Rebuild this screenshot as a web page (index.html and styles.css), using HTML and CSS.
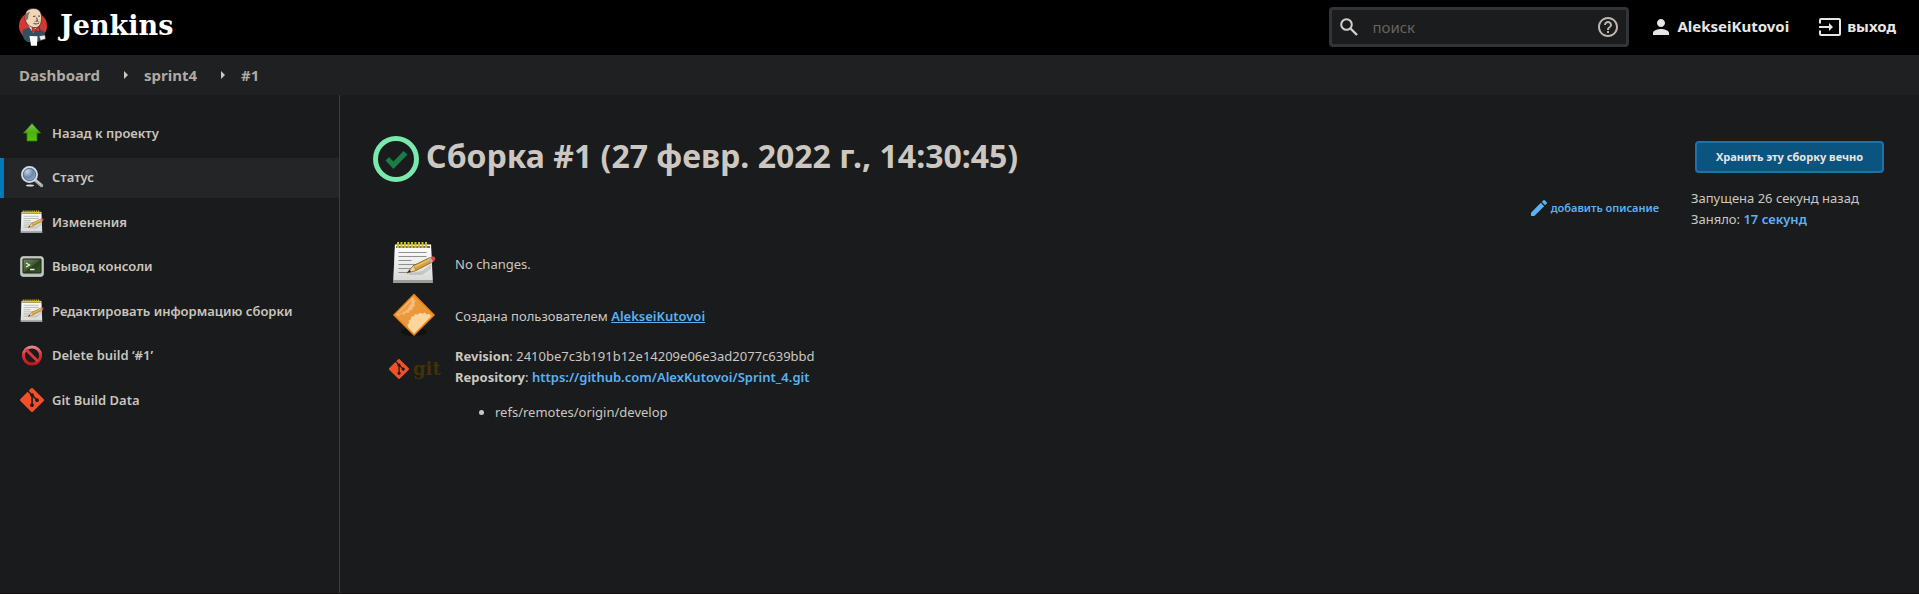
FILE: index.html
```html
<!DOCTYPE html>
<html lang="ru">
<head>
<meta charset="utf-8">
<meta name="viewport" content="width=device-width, initial-scale=1">
<title>sprint4 #1 [Jenkins]</title>
<link rel="stylesheet" href="styles.css">
</head>
<body>
<svg class="defs" width="0" height="0" aria-hidden="true">
  <defs>
    <linearGradient id="g-green" x1="0" y1="0" x2="0" y2="1"><stop offset="0" stop-color="#86c552"/><stop offset=".5" stop-color="#4fae14"/><stop offset="1" stop-color="#52c80c"/></linearGradient>
    <linearGradient id="g-paper" x1="0" y1="0" x2="0" y2="1"><stop offset="0" stop-color="#ffffff"/><stop offset="1" stop-color="#d8dad8"/></linearGradient>
    <linearGradient id="g-red" x1="0" y1="0" x2="0" y2="1"><stop offset="0" stop-color="#e8868a"/><stop offset=".45" stop-color="#dd3338"/><stop offset="1" stop-color="#c4161c"/></linearGradient>
    <linearGradient id="g-screen" x1="0" y1="0" x2="1" y2="1"><stop offset="0" stop-color="#6d8a5c"/><stop offset=".5" stop-color="#3f5a31"/><stop offset=".52" stop-color="#263f1b"/><stop offset="1" stop-color="#3b5a29"/></linearGradient>
    <radialGradient id="g-lens" cx=".35" cy=".3" r=".8"><stop offset="0" stop-color="#c2d3e8"/><stop offset=".5" stop-color="#6c87ab"/><stop offset="1" stop-color="#aec3dd"/></radialGradient>
    <linearGradient id="g-orange" x1="0" y1="0" x2="1" y2="1"><stop offset="0" stop-color="#f0a04a"/><stop offset="1" stop-color="#e58f2c"/></linearGradient>
    <symbol id="notepad" viewBox="0 0 44 42">
      <path d="M3 2h36l2 39H1z" fill="#9a9c9a"/>
      <path d="M3 3h36l1.500 35H1.500z" fill="url(#g-paper)"/>
      <path d="M4 4h34v2H4z" fill="#77705a"/>
      <path d="M6 0v6M9.500 0v6M13 0v6M16.500 0v6M20 0v6M23.500 0v6M27 0v6M30.500 0v6M34 0v6" stroke="#d3bd24" stroke-width="2"/>
      <path d="M6.500 10.500h28M6.500 14.500h28M6.500 18.500h13M6.500 22.500h25M6.500 26.500h13M6.500 30.500h10" stroke="#8d908d" stroke-width="1"/>
      <path d="M17 31l13-2 9-7v5l-9 6-13 0z" fill="#000" opacity=".12"/>
      <path d="M15 31l6.500-7.500L38 15.500l2.500 4.500-16.500 8.500z" fill="#d3a03c" stroke="#8a5e1a" stroke-width=".8"/>
      <path d="M15 31l6.500-7.500 2.500 5z" fill="#ecd3a4" stroke="#8a5e1a" stroke-width=".5"/>
      <path d="M15 31l2.800-3.200 1 2z" fill="#222"/>
      <path d="M22.500 25l16-8" stroke="#f2cf7a" stroke-width="1.200"/>
      <path d="M36.500 16.200l2.500-1.200 2.500 4.500-2.500 1.300z" fill="#b4b6b4"/>
      <path d="M38.500 15.200l2-.8c2-.6 3.700 2.700 2.200 4l-1.800 1.200z" fill="#e04446"/>
    </symbol>
    <symbol id="git-mark" viewBox="0 0 92 92">
      <path fill="#f34f29" d="M90.156 41.965 50.036 1.848a5.918 5.918 0 0 0-8.372 0l-8.328 8.332 10.566 10.566a7.030 7.030 0 0 1 7.230 1.684 7.034 7.034 0 0 1 1.669 7.277l10.187 10.184a7.028 7.028 0 0 1 7.278 1.672 7.040 7.040 0 0 1 0 9.957 7.050 7.050 0 0 1-9.965 0 7.044 7.044 0 0 1-1.528-7.660l-9.500-9.497V59.360a7.040 7.040 0 0 1 1.860 11.290 7.040 7.040 0 0 1-9.957 0 7.040 7.040 0 0 1 0-9.958 7.060 7.060 0 0 1 2.304-1.539V33.926a7.049 7.049 0 0 1-3.820-9.234L29.242 14.272 1.730 41.777a5.918 5.918 0 0 0 0 8.371L41.852 90.270a5.925 5.925 0 0 0 8.370 0l39.934-39.934a5.925 5.925 0 0 0 0-8.371"/>
    </symbol>
  </defs>
</svg>

<header class="header">
  <a class="brand" href="#">
    <svg class="brand-mark" viewBox="0 0 28 38" aria-hidden="true">
      <circle cx="14" cy="18" r="14" fill="#d33833"/>
      <path d="M4 22c2-1.500 4-2 6-2.500l9 .5 7 4-1 6-6 4H8l-3-3c-1.500-3-2-6-1-9z" fill="#335061"/>
      <path d="M9 17l5 8 5-7z" fill="#f2efec"/>
      <path d="M6.500 8C6 3 10 .5 14.500.5c5 0 7.500 3 8 7.500.3 5-.5 10.500-5 11.500-4 .5-8-1-9.500-4C6.500 14 5.500 10.500 6.500 8z" fill="#f0d6b7" stroke="#3b2f2a" stroke-width=".8"/>
      <path d="M6.500 7C5.500 8.500 6 11 7 12.500l2-1.500.5-4L11 4c-2 .2-3.500 1.200-4.500 3z" fill="#7b7672"/>
      <path d="M14 8.500l2.500-.4M19 8l2 .2M17.500 9.500l1 3-1.500.5M14.500 15.500c2 .8 4 .5 5.500-.5" stroke="#3b2f2a" fill="none" stroke-width=".9"/>
      <path d="M15.500 13.800c1.800-.8 3.500-.6 5 .2" fill="none" stroke="#8a7a6c" stroke-width="1"/>
      <path d="M13 19.500l3.500 1.500 4-2v5l-4-1.500-3.500 2z" fill="#d33833" stroke="#7a1513" stroke-width=".5"/>
      <path d="M10.500 28l8 .3-.5 9.500h-6z" fill="#fff"/>
      <path d="M20 28l6-1 .5 4-5 1.500z" fill="#f2efec" stroke="#3b2f2a" stroke-width=".5"/>
    </svg>
    <span class="brand-name">Jenkins</span>
  </a>
  <form class="search" role="search">
    <svg class="search-icon" viewBox="0 0 18 18" aria-hidden="true"><circle cx="6.500" cy="6.500" r="5.300" fill="none" stroke="currentColor" stroke-width="2"/><path d="M10.500 10.500l6.500 6.500" stroke="currentColor" stroke-width="2.400"/></svg>
    <input class="search-input" type="text" placeholder="поиск" aria-label="поиск">
    <a class="search-help" href="#" aria-label="Справка">
      <svg viewBox="0 0 24 24" aria-hidden="true"><path fill="currentColor" d="M11 18h2v-2h-2v2zm1-16C6.480 2 2 6.480 2 12s4.480 10 10 10 10-4.480 10-10S17.520 2 12 2zm0 18c-4.410 0-8-3.590-8-8s3.590-8 8-8 8 3.590 8 8-3.590 8-8 8zm0-14c-2.210 0-4 1.790-4 4h2c0-1.100.9-2 2-2s2 .9 2 2c0 2-3 1.750-3 5h2c0-2.250 3-2.500 3-5 0-2.210-1.790-4-4-4z"/></svg>
    </a>
  </form>
  <a class="header-link" href="#">
    <svg class="person" viewBox="4 4 16 16" aria-hidden="true"><path fill="currentColor" d="M12 12c2.210 0 4-1.790 4-4s-1.790-4-4-4-4 1.790-4 4 1.790 4 4 4zm0 2c-2.670 0-8 1.340-8 4v2h16v-2c0-2.660-5.330-4-8-4z"/></svg>
    <span>AlekseiKutovoi</span>
  </a>
  <a class="header-link logout" href="#">
    <svg class="exit" viewBox="0 0 22 18" aria-hidden="true"><path d="M1 5.500V2a1 1 0 0 1 1-1h18a1 1 0 0 1 1 1v14a1 1 0 0 1-1 1H2a1 1 0 0 1-1-1v-3.500M0 9h11" fill="none" stroke="currentColor" stroke-width="2"/><path d="M10 5l4 4-4 4z" fill="currentColor"/></svg>
    <span>выход</span>
  </a>
</header>

<nav class="breadcrumbs" aria-label="Путь">
  <a href="#">Dashboard</a>
  <svg class="crumb-arrow" viewBox="0 0 4 8" aria-hidden="true"><path d="M0 0l4 4-4 4z" fill="currentColor"/></svg>
  <a href="#">sprint4</a>
  <svg class="crumb-arrow" viewBox="0 0 4 8" aria-hidden="true"><path d="M0 0l4 4-4 4z" fill="currentColor"/></svg>
  <a href="#">#1</a>
</nav>

<div class="page">
  <aside class="side">
    <nav class="tasks" aria-label="Задачи">
      <a class="task" href="#">
        <svg viewBox="0 0 24 24" aria-hidden="true"><path d="M12 2.500L20.500 12H17v8H7v-8H3.500z" fill="url(#g-green)" stroke="#2f7d12" stroke-width=".8"/></svg>
        <span>Назад к проекту</span>
      </a>
      <a class="task active" href="#" aria-current="page">
        <svg viewBox="0 0 24 24" aria-hidden="true"><ellipse cx="10" cy="19.500" rx="4" ry="1" fill="#d9dcdf"/><path d="M14.500 13.500l7 6" stroke="#a8aaa8" stroke-width="3.500" stroke-linecap="round"/><path d="M15 13.500l6 5" stroke="#e4e5e4" stroke-width="1"/><circle cx="9.500" cy="8.500" r="7.500" fill="url(#g-lens)" stroke="#d4dbe3" stroke-width="2"/><circle cx="9.500" cy="8.500" r="6.200" fill="none" stroke="#4b6283" stroke-width=".8"/></svg>
        <span>Статус</span>
      </a>
      <a class="task" href="#">
        <svg aria-hidden="true"><use href="#notepad"/></svg>
        <span>Изменения</span>
      </a>
      <a class="task" href="#">
        <svg viewBox="0 0 24 24" aria-hidden="true"><rect x=".8" y="1.800" width="22.400" height="19.400" rx="2" fill="#b9bbb6" stroke="#dfe0dd" stroke-width="1"/><rect x="3" y="4" width="18" height="14" rx=".5" fill="url(#g-screen)" stroke="#1b2a12" stroke-width="1"/><path d="M6 8l3.500 2L6 12M10 14.500h4.500" fill="none" stroke="#e9f3e2" stroke-width="1.300"/></svg>
        <span>Вывод консоли</span>
      </a>
      <a class="task" href="#">
        <svg aria-hidden="true"><use href="#notepad"/></svg>
        <span>Редактировать информацию сборки</span>
      </a>
      <a class="task" href="#">
        <svg viewBox="0 0 24 24" aria-hidden="true"><circle cx="12" cy="11.500" r="8.600" fill="none" stroke="url(#g-red)" stroke-width="3"/><path d="M6 5.500l12 12" stroke="#d8383c" stroke-width="3"/></svg>
        <span>Delete build ‘#1’</span>
      </a>
      <a class="task" href="#">
        <svg aria-hidden="true"><use href="#git-mark"/></svg>
        <span>Git Build Data</span>
      </a>
    </nav>
  </aside>

  <main class="main">
    <div class="build">
      <h1 class="build-title">
        <svg class="status" viewBox="0 0 46 46" aria-hidden="true"><circle cx="23" cy="23" r="20.500" fill="none" stroke="#7ae9ac" stroke-width="5"/><path d="M12.500 24.500l3.500-3.500 4.500 4.500 10-10.500 4 3.500L20.500 33z" fill="#1a7c46"/></svg>
        <span>Сборка #1 (27 февр. 2022 г., 14:30:45)</span>
      </h1>
      <div class="facts">
        <svg class="fact-icon" aria-hidden="true"><use href="#notepad"/></svg>
        <p class="fact">No changes.</p>
        <svg class="fact-icon" viewBox="0 0 44 44" aria-hidden="true">
          <ellipse cx="22" cy="39" rx="13" ry="4" fill="#101112"/>
          <path d="M22 1.500L42 22 22 42 2 22z" fill="url(#g-orange)"/>
          <path d="M3 22L21 3.500l1 3.500 1.500 1-1.300 2.500.8 2.500-2.500 1.200 0 2.800-3 .2-.8 2.800-2.700-.5-2 2.200-2.500-1-2.500 2z" fill="#f7be78"/>
          <path d="M4.500 22L19.500 7l0 3.500-2 2.500-2 3.500-3.500 2.500-3.500 2z" fill="#eda049"/>
          <path d="M40.500 22L22 41l-6-6.500-.5-3 1.800-1.500-.8-2.500 2.500-1.300.2-2.700 2.800-.2 1.200-2.500 2.600.9 2-2 2.400 1.300 2.400-1.500 2 2 2.700-.7 1.200 2.300z" fill="#fbd59c"/>
          <path d="M22 1.500L42 22 22 42 2 22z" fill="none" stroke="#ea8214" stroke-width="1.500"/>
        </svg>
        <p class="fact">Создана пользователем <a class="underlined" href="#">AlekseiKutovoi</a></p>
        <div class="git-logo">
          <svg aria-hidden="true"><use href="#git-mark"/></svg>
          <span>git</span>
        </div>
        <div class="revision">
          <p><b>Revision</b>: 2410be7c3b191b12e14209e06e3ad2077c639bbd</p>
          <p><b>Repository</b>: <a href="#">https://github.com/AlexKutovoi/Sprint_4.git</a></p>
          <ul class="refs"><li>refs/remotes/origin/develop</li></ul>
        </div>
      </div>
    </div>

    <a class="describe" href="#">
      <svg viewBox="3 3 18 18" aria-hidden="true"><path fill="currentColor" d="M3 17.250V21h3.750L17.810 9.940l-3.750-3.750L3 17.250zM20.710 7.040a1 1 0 0 0 0-1.410l-2.340-2.340a1 1 0 0 0-1.410 0l-1.830 1.830 3.750 3.750 1.830-1.830z"/></svg>
      <span>добавить описание</span>
    </a>

    <div class="meta">
      <button class="keep" type="button">Хранить эту сборку вечно</button>
      <p>Запущена 26 секунд назад</p>
      <p>Заняло: <a href="#">17 секунд</a></p>
    </div>
  </main>
</div>
</body>
</html>
```
FILE: styles.css
```css
* {
  box-sizing: border-box;
}

html,
body {
  height: 100%;
}

body {
  display: flex;
  flex-direction: column;
  margin: 0;
  background: #191b1c;
  color: #ccc7c1;
  font: 13px/21px "Noto Sans", "Open Sans", sans-serif;
}

p,
h1,
ul {
  margin: 0;
}

svg {
  display: block;
  flex: none;
}

a {
  color: #59b3f3;
  font-weight: 600;
  text-decoration: none;
}

.defs {
  position: absolute;
}

/* Header */

.header {
  display: flex;
  align-items: center;
  height: 55px;
  padding: 0 23px 2px 19px;
  background: #000;
}

.brand {
  display: flex;
  align-items: center;
  gap: 13px;
  margin-right: auto;
  color: #fff;
}

.brand-mark {
  width: 28px;
  height: 38px;
}

.brand-name {
  padding-bottom: 2px;
  font: bold 27px/32px "DejaVu Serif", serif;
}

.search {
  display: flex;
  align-items: center;
  width: 300px;
  height: 40px;
  padding: 0 6px 0 8px;
  border: 3px solid #333436;
  border-radius: 4px;
  background: #1b1c1d;
}

.search-icon {
  width: 18px;
  height: 18px;
  color: #d3cfca;
}

.search-input {
  flex: 1;
  min-width: 0;
  height: 32px;
  padding: 0 14px;
  border: 0;
  outline: 0;
  background: none;
  color: #ccc7c1;
  font: 15px/20px "Noto Sans", sans-serif;
}

.search-input::placeholder {
  color: #66645f;
  opacity: 1;
}

.search-help {
  color: #bdb7ae;
}

.search-help svg {
  width: 24px;
  height: 24px;
}

.header-link {
  display: flex;
  align-items: center;
  gap: 8px;
  margin-left: 24px;
  color: #e8e6e3;
  font-size: 15px;
  font-weight: 700;
}

.logout {
  gap: 6px;
  margin-left: 30px;
}

.person {
  width: 16px;
  height: 16px;
}

.exit {
  width: 22px;
  height: 18px;
}

/* Breadcrumbs */

.breadcrumbs {
  display: flex;
  align-items: center;
  height: 40px;
  padding: 0 19px;
  background: #1e2022;
  color: #ccc7c1;
}

.breadcrumbs a {
  color: #b0aaa1;
  font-size: 15px;
  font-weight: 700;
}

.crumb-arrow {
  width: 4px;
  height: 8px;
  margin: 0 16px 0 24px;
}

/* Side panel */

.page {
  display: flex;
  flex: 1;
  border-bottom: 1px solid #150d10;
}

.side {
  width: 340px;
  padding-top: 18px;
  border-right: 1px solid #3a3c3d;
}

.tasks {
  display: flex;
  flex-direction: column;
  justify-content: space-between;
  height: 307px;
}

.task {
  display: flex;
  align-items: center;
  gap: 8px;
  height: 40px;
  padding-left: 16px;
  border-left: 4px solid transparent;
  color: #c9c4bd;
}

.task.active {
  border-left-color: #0079b8;
  background: #232526;
}

.task svg {
  width: 24px;
  height: 24px;
}

/* Build details */

.main {
  display: flex;
  flex: 1;
  align-items: flex-start;
  padding: 41px 35px 0 33px;
}

.build {
  flex: 1;
}

.build-title {
  display: flex;
  gap: 7px;
  font-size: 32px;
  font-weight: 700;
  line-height: 40px;
}

.status {
  width: 46px;
  height: 46px;
}

.facts {
  display: grid;
  grid-template-columns: 50px 1fr;
  align-items: center;
  gap: 8px 16px;
  padding: 59px 0 0 16px;
}

.fact {
  padding-top: 3px;
}

.fact-icon {
  width: 44px;
  height: 44px;
  justify-self: center;
}

.git-logo {
  display: flex;
  align-items: center;
  align-self: start;
  gap: 4px;
  padding-top: 12px;
  color: #413108;
  font: bold 18px/24px "DejaVu Serif", serif;
}

.git-logo svg {
  width: 20px;
  height: 20px;
}

.revision {
  padding-top: 1px;
}

.underlined {
  text-decoration: underline;
}

.refs {
  padding: 14px 0 0 40px;
}

.describe {
  display: flex;
  align-items: center;
  gap: 4px;
  margin: 61px 32px 0 0;
  font-size: 11px;
}

.describe svg {
  width: 16px;
  height: 16px;
}

.meta {
  width: 193px;
  padding-top: 5px;
}

.keep {
  display: block;
  width: 189px;
  height: 32px;
  margin: 0 0 15px 4px;
  padding: 0;
  border: 2px solid #1d72aa;
  border-radius: 4px;
  background: #0b5480;
  color: #e8e6e3;
  font: bold 11px/20px "Noto Sans", sans-serif;
}
```
